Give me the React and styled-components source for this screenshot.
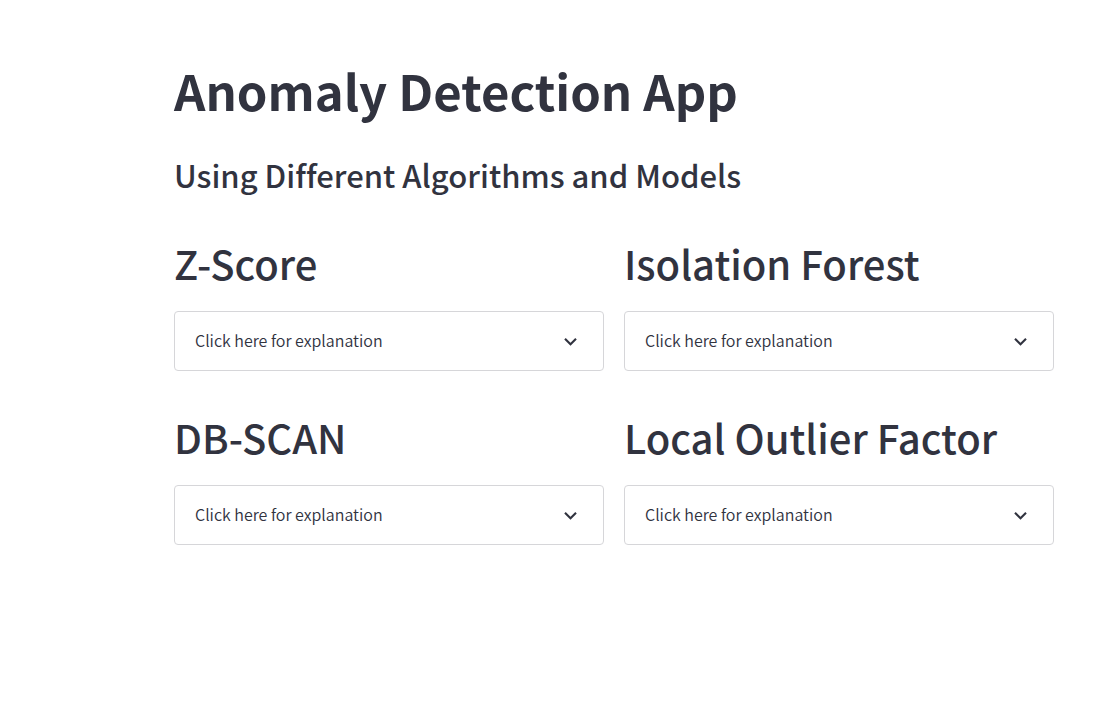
import React from "react";
import styled, { createGlobalStyle } from "styled-components";

const GlobalStyle = createGlobalStyle`
  *, *::before, *::after { box-sizing: border-box; }
  body {
    margin: 0;
    background: #ffffff;
    color: #31333f;
    font-family: "Source Sans Pro", "Noto Sans CJK SC", sans-serif;
    font-variant-ligatures: none;
  }
`;

const Page = styled.main`
  padding: 52px 62px 56px 174px;
`;

const Title = styled.h1`
  margin: 0;
  font-size: 49px;
  line-height: 76px;
  font-weight: 700;
`;

const Subtitle = styled.h3`
  margin: 20px 0 0;
  font-size: 31px;
  line-height: 54px;
  font-weight: 500;
`;

const Grid = styled.div`
  display: grid;
  grid-template-columns: 1fr 1fr;
  column-gap: 20px;
  row-gap: 34px;
  margin-top: 29px;
`;

const SectionTitle = styled.h2`
  margin: 0 0 16px;
  font-size: 40px;
  line-height: 64px;
  font-weight: 500;
`;

const Expander = styled.button`
  display: flex;
  align-items: center;
  justify-content: space-between;
  width: 100%;
  height: 60px;
  padding: 0 20px;
  border: 1px solid #d6d6d9;
  border-radius: 4px;
  background: #ffffff;
  color: inherit;
  font-family: inherit;
  font-size: 16px;
  font-weight: 350;
  line-height: 28px;
  cursor: pointer;
`;

const ExpanderLabel = styled.span`
  padding-bottom: 2px;
`;

const Chevron = () => (
  <svg width="25" height="25" viewBox="0 0 24 24" fill="#31333f" aria-hidden="true">
    <path d="M7.41 8.59 12 13.17l4.59-4.58L18 10l-6 6-6-6z" />
  </svg>
);

const algorithms = ["Z-Score", "Isolation Forest", "DB-SCAN", "Local Outlier Factor"];

export default function App() {
  return (
    <>
      <GlobalStyle />
      <Page>
        <Title>Anomaly Detection App</Title>
        <Subtitle>Using Different Algorithms and Models</Subtitle>
        <Grid>
          {algorithms.map((name) => (
            <section key={name}>
              <SectionTitle>{name}</SectionTitle>
              <Expander type="button" aria-expanded="false">
                <ExpanderLabel>Click here for explanation</ExpanderLabel>
                <Chevron />
              </Expander>
            </section>
          ))}
        </Grid>
      </Page>
    </>
  );
}
